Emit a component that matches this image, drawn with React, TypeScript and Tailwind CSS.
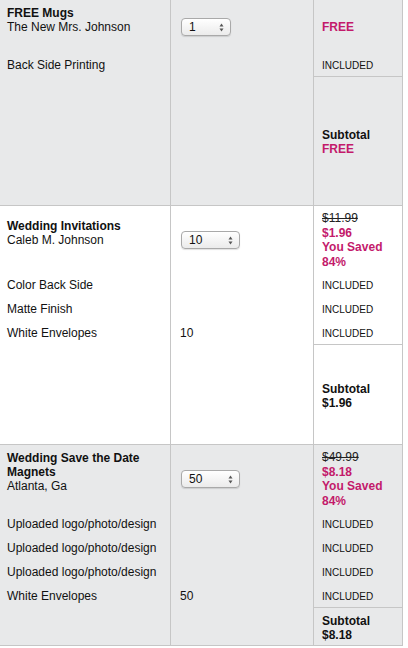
import React from 'react';

type Line = { label: string; qty?: string };

interface CartItem {
  id: string;
  title: string;
  subtitle: string;
  qty: string;
  selectW: string;
  oldPrice?: string;
  price: string;
  saved?: string;
  lines: Line[];
  subtotal: string;
  free?: boolean;
  bg: string;
  headerH: string;
  subH: string;
}

const items: CartItem[] = [
  {
    id: 'mugs',
    title: 'FREE Mugs',
    subtitle: 'The New Mrs. Johnson',
    qty: '1',
    selectW: 'w-[50px]',
    price: 'FREE',
    lines: [{ label: 'Back Side Printing' }],
    subtotal: 'FREE',
    free: true,
    bg: 'bg-[#e8e9ea]',
    headerH: 'h-[52px]',
    subH: 'h-[129px]'
  },
  {
    id: 'invites',
    title: 'Wedding Invitations',
    subtitle: 'Caleb M. Johnson',
    qty: '10',
    selectW: 'w-[59px]',
    oldPrice: '$11.99',
    price: '$1.96',
    saved: '84%',
    lines: [
      { label: 'Color Back Side' },
      { label: 'Matte Finish' },
      { label: 'White Envelopes', qty: '10' }
    ],
    subtotal: '$1.96',
    bg: 'bg-white',
    headerH: 'h-[66px]',
    subH: 'h-[100px]'
  },
  {
    id: 'magnets',
    title: 'Wedding Save the Date Magnets',
    subtitle: 'Atlanta, Ga',
    qty: '50',
    selectW: 'w-[59px]',
    oldPrice: '$49.99',
    price: '$8.18',
    saved: '84%',
    lines: [
      { label: 'Uploaded logo/photo/design' },
      { label: 'Uploaded logo/photo/design' },
      { label: 'Uploaded logo/photo/design' },
      { label: 'White Envelopes', qty: '50' }
    ],
    subtotal: '$8.18',
    bg: 'bg-[#e8e9ea]',
    headerH: 'h-[66px]',
    subH: 'h-[38px]'
  }
];

function QtySelect({ value, width }: { value: string; width: string }) {
  return (
    <div
      className={`${width} h-[18px] flex items-center justify-between rounded-[4px] border border-[#a9a9a9] bg-linear-to-b from-white to-[#ebebeb] pl-[7px] pr-[6px] text-[12px] leading-none text-[#111] shadow-[0_1px_1px_rgba(0,0,0,0.12)]`}
    >
      <span>{value}</span>
      <svg width="5" height="9" viewBox="0 0 5 9">
        <path d="M2.5 0.5 L4.5 3.5 L0.5 3.5 Z" fill="#555" />
        <path d="M2.5 8.5 L4.5 5.5 L0.5 5.5 Z" fill="#555" />
      </svg>
    </div>
  );
}

function CartRow({ item }: { item: CartItem }) {
  return (
    <div className={`flex border-b border-[#c6c6c6] ${item.bg}`}>
      {/* Product */}
      <div className="w-[171px] border-r border-[#c6c6c6] flex flex-col">
        <div className={`${item.headerH} flex flex-col justify-center pl-[7px] pr-[6px] pt-[2px] pb-[14px] leading-[14px]`}>
          <span className="font-bold">{item.title}</span>
          <span>{item.subtitle}</span>
        </div>
        {item.lines.map((line, i) => (
          <div key={i} className="h-6 flex items-center pl-[7px] pt-[2px]">
            {line.label}
          </div>
        ))}
      </div>

      {/* Quantity */}
      <div className="w-[143px] border-r border-[#c6c6c6] flex flex-col">
        <div className={`${item.headerH} flex items-center pl-[10px] pt-[2px]`}>
          <QtySelect value={item.qty} width={item.selectW} />
        </div>
        {item.lines.map((line, i) => (
          <div key={i} className="h-6 flex items-center pl-[9px] pt-[2px]">
            {line.qty}
          </div>
        ))}
      </div>

      {/* Price */}
      <div className="w-[89px] border-r border-[#c6c6c6] flex flex-col">
        <div className={`${item.headerH} flex flex-col justify-center pl-2 pt-[2px] leading-[14.5px]`}>
          {item.oldPrice && <span className="line-through text-[#222]">{item.oldPrice}</span>}
          <span className="font-bold text-[#c31a6b]">{item.price}</span>
          {item.saved && (
            <>
              <span className="font-bold text-[#c31a6b]">You Saved</span>
              <span className="font-bold text-[#c31a6b]">{item.saved}</span>
            </>
          )}
        </div>
        {item.lines.map((_, i) => (
          <div key={i} className="h-6 flex items-center pl-2 pt-[2px] text-[10px]">
            INCLUDED
          </div>
        ))}
        <div className={`${item.subH} border-t border-[#c6c6c6] flex flex-col justify-center pl-2 pt-[2px] leading-[14px] font-bold`}>
          <span>Subtotal</span>
          <span className={item.free ? 'text-[#c31a6b]' : ''}>{item.subtotal}</span>
        </div>
      </div>
    </div>
  );
}

export default function App() {
  return (
    <div className="w-[408px] h-[648px] overflow-hidden bg-white font-['Liberation_Sans',Arial,sans-serif] text-[12px] text-[#111]">
      <div className="w-[403px]">
        {items.map((item) => (
          <CartRow key={item.id} item={item} />
        ))}
      </div>
    </div>
  );
}
